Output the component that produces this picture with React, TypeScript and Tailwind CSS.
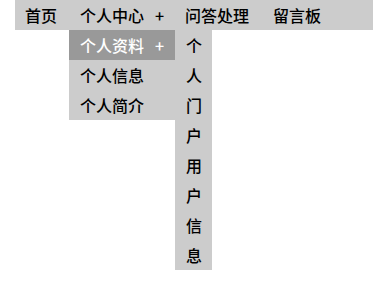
import React from "react"

const font = { fontFamily: '"Noto Sans CJK SC", "Noto Sans", sans-serif' }

const subItems = ["个", "人", "门", "户", "用", "户", "信", "息"]

export default function App() {
  return (
    <div className="min-h-screen bg-white" style={font}>
      {/* Nav bar */}
      <ul className="ml-[15px] flex h-[30px] bg-[#cccccc] text-[16px] leading-[30px] font-medium text-black">
        <li className="w-[54px] pl-[10px]">首页</li>
        <li className="relative w-[106px] pl-[11px]">
          <span>个人中心</span>
          <span className="ml-[11px]">+</span>
          {/* Dropdown */}
          <ul className="absolute left-0 top-[30px] w-[106px] bg-[#cccccc]">
            <li className="relative h-[30px] bg-[#999999] pl-[11px] text-white">
              <span>个人资料</span>
              <span className="ml-[11px]">+</span>
              {/* Submenu */}
              <ul className="absolute left-full top-0 w-[37px] bg-[#cccccc] text-black">
                {subItems.map((ch, i) => (
                  <li key={i} className="h-[30px] pl-[11px]">
                    {ch}
                  </li>
                ))}
              </ul>
            </li>
            <li className="h-[30px] pl-[11px]">个人信息</li>
            <li className="h-[30px] pl-[11px]">个人简介</li>
          </ul>
        </li>
        <li className="w-[88px] pl-[10px]">问答处理</li>
        <li className="pl-[10px]">留言板</li>
      </ul>
    </div>
  )
}
